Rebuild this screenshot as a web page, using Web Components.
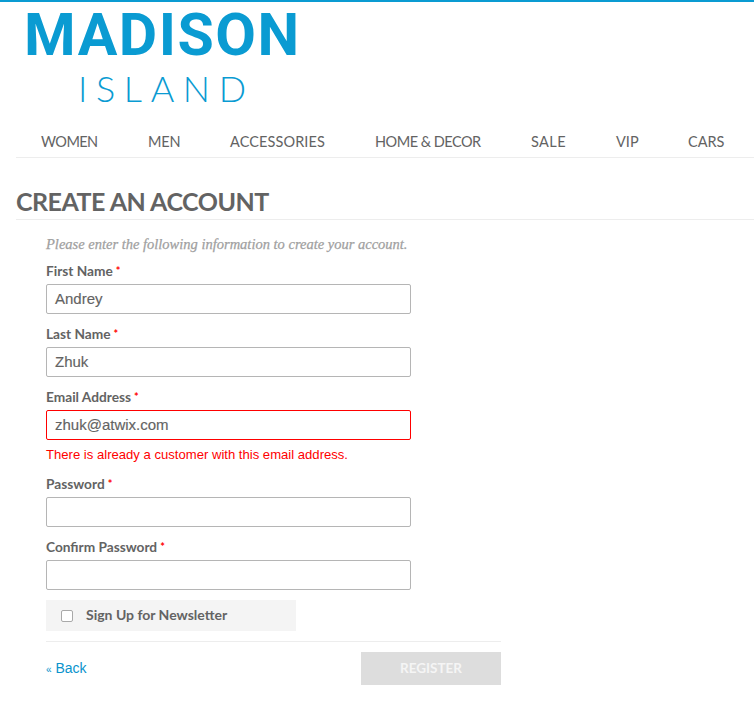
<!DOCTYPE html>
<html lang="en"><head><meta charset="utf-8"><title>Create an account</title>
<style>
html,body{margin:0;padding:0;background:#fff}
body{font-family:"Lato","Liberation Sans",sans-serif;color:#636363;height:708px;overflow:hidden}
</style></head><body>
<site-page>
  <site-logo slot="logo"></site-logo>
  <site-nav slot="nav">
    <nav-item style="width:107px;letter-spacing:-.55px">WOMEN</nav-item>
    <nav-item style="width:82px;letter-spacing:-.2px">MEN</nav-item>
    <nav-item style="width:145px;letter-spacing:.1px">ACCESSORIES</nav-item>
    <nav-item style="width:156px;letter-spacing:-.5px">HOME &amp; DECOR</nav-item>
    <nav-item style="width:85px;letter-spacing:.4px">SALE</nav-item>
    <nav-item style="width:72px">VIP</nav-item>
    <nav-item style="width:60px">CARS</nav-item>
  </site-nav>
  <page-title slot="title">CREATE AN ACCOUNT</page-title>
  <account-form slot="form">
    <form-field label="First Name" value="Andrey"></form-field>
    <form-field label="Last Name" value="Zhuk"></form-field>
    <form-field label="Email Address" value="zhuk@atwix.com" error="There is already a customer with this email address."></form-field>
    <form-field label="Password"></form-field>
    <form-field label="Confirm Password"></form-field>
  </account-form>
</site-page>
<script>
function def(name, css, html){
  customElements.define(name, class extends HTMLElement{
    connectedCallback(){
      if(this.shadowRoot) return;
      const r=this.attachShadow({mode:'open'});
      r.innerHTML='<style>'+css+'</style>'+(typeof html==='function'?html(this):html);
    }
  });
}
def('site-page',
  ':host{display:block;border-top:2px solid #0a9bd2;box-sizing:border-box;height:708px;padding-left:16px}',
  '<slot name="logo"></slot><slot name="nav"></slot><slot name="title"></slot><slot name="form"></slot>');
def('site-logo',
  `:host{display:flex;flex-direction:column;height:125px;color:#0a9bd2;font-family:"Lato","Liberation Sans",sans-serif}
   .a{font-family:Roboto,"Liberation Sans",sans-serif;font-size:59px;font-weight:700;line-height:70px;margin:-2px 0 0 8px;letter-spacing:1.5px;white-space:nowrap}
   .b{font-size:36px;font-weight:300;line-height:36px;margin:0 0 0 62px;letter-spacing:8.6px;white-space:nowrap}`,
  '<div class="a">MADISON</div><div class="b">ISLAND</div>');
def('site-nav',
  ':host{display:flex;height:30px;padding-left:25px;border-bottom:1px solid #ededed;box-sizing:content-box}',
  '<slot></slot>');
def('nav-item',
  ':host{display:block;flex:none;font-size:14.5px;line-height:30px;color:#636363;white-space:nowrap}',
  '<slot></slot>');
def('page-title',
  `:host{display:block;margin-top:29px;height:32px;border-bottom:1px solid #ededed;font-size:25px;font-weight:700;line-height:28px;color:#636363;letter-spacing:-.5px}`,
  '<slot></slot>');
def('form-field',
  `:host{display:block;width:365px}
   label{display:block;font-size:13.7px;font-weight:700;line-height:16px;color:#636363;margin-bottom:5px;white-space:nowrap}
   i{font-style:normal;color:#f00;font-size:11px;margin-left:3px;vertical-align:1px}
   .in{box-sizing:border-box;height:30px;border:1px solid #b5b5b5;border-radius:2px;padding-left:8px;font:15px/28px "Liberation Sans",sans-serif;-webkit-text-stroke:.15px #636363;color:#636363;background:#fff}
   .in.err{border-color:#f00}
   .msg{font:13.1px/16px "Liberation Sans",sans-serif;color:#f00;margin:7px 0 1px;white-space:nowrap}`,
  h=>{
    const e=h.getAttribute('error');
    return `<label>${h.getAttribute('label')}<i>*</i></label><div class="in${e?' err':''}">${h.getAttribute('value')||''}</div>`+(e?`<div class="msg">${e}</div>`:'');
  });
def('account-form',
  `:host{display:block;padding:16px 0 0 30px;width:455px;box-sizing:content-box}
   .intro{font:italic 14.5px/16px "Liberation Serif",serif;-webkit-text-stroke:.25px #a0a0a0;color:#a0a0a0;margin-bottom:11px;white-space:nowrap}
   .fields{display:flex;flex-direction:column}
   ::slotted(form-field){margin-bottom:12px}
   .news{display:flex;align-items:center;width:250px;height:31px;background:#f4f4f4;margin-top:-2px;font-size:14px;font-weight:700;color:#636363}
   .news span:last-child{padding-bottom:2px}
   .box{width:10px;height:10px;border:1px solid #a9a9a9;border-radius:2px;background:#fff;margin:0 13px 0 15px}
   .bar{margin-top:10px;border-top:1px solid #ededed;padding-top:10px;display:flex;justify-content:space-between;align-items:center}
   .back{font:14px/16px "Liberation Sans",sans-serif;color:#0a93cc}
   .back small{font-size:10px}
   .reg{width:140px;height:33px;background:#ddd;color:#f5f5f5;font-size:13.5px;line-height:32px;font-weight:700;display:flex;align-items:flex-start;justify-content:center}`,
  `<div class="intro">Please enter the following information to create your account.</div>
   <div class="fields"><slot></slot></div>
   <div class="news"><span class="box"></span><span>Sign Up for Newsletter</span></div>
   <div class="bar"><span class="back"><small>«</small> Back</span><span class="reg">REGISTER</span></div>`);
</script>
</body></html>
